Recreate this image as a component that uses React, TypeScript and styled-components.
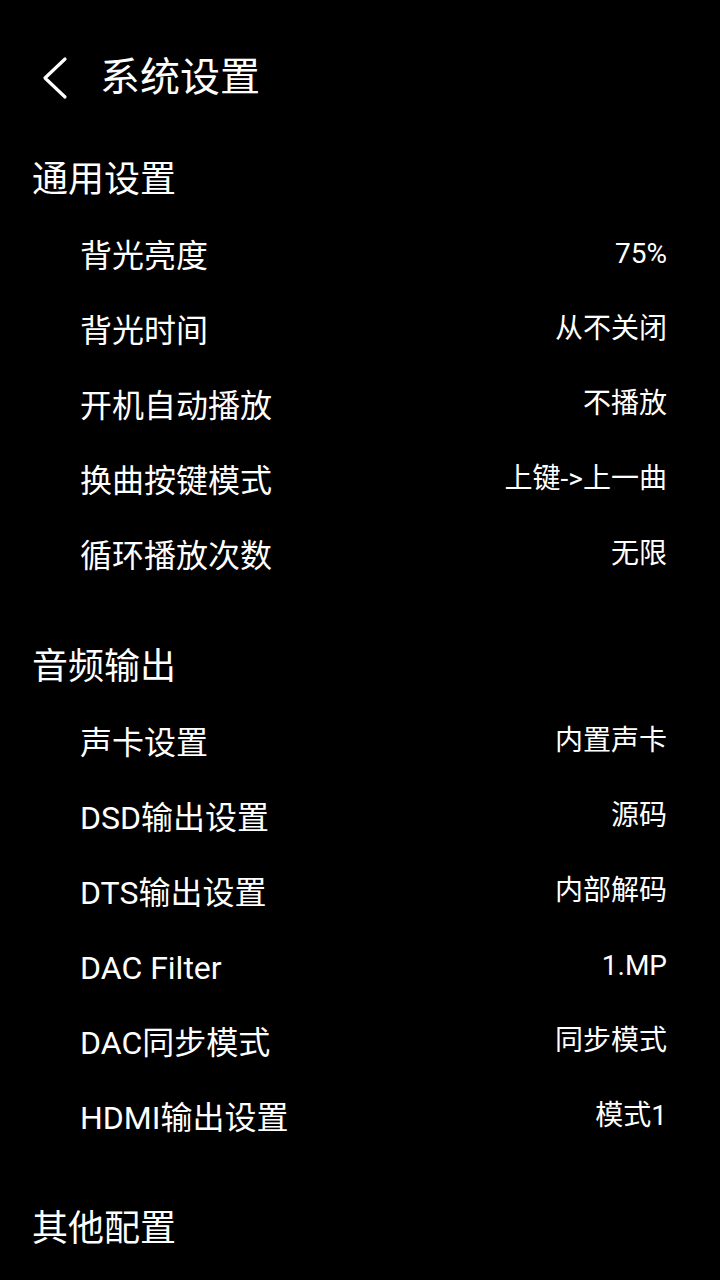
import React from "react";
import styled, { createGlobalStyle } from "styled-components";

const GlobalStyle = createGlobalStyle`
  html, body {
    margin: 0;
    padding: 0;
    background: #000;
  }
  body {
    font-family: Roboto, "Noto Sans CJK SC", sans-serif;
    color: #fff;
  }
`;

const Page = styled.div`
  width: 720px;
  min-height: 1280px;
  background: #000;
  overflow: hidden;
`;

const Header = styled.header`
  height: 138px;
  box-sizing: border-box;
  padding: 40px 0 0 41px;
  display: flex;
  align-items: flex-start;
`;

const HeaderInner = styled.div`
  height: 76px;
  display: flex;
  align-items: center;
  gap: 31px;
`;

const BackButton = styled.button`
  background: none;
  border: none;
  padding: 0;
  width: 28px;
  height: 44px;
  display: flex;
  align-items: center;
  justify-content: center;
  cursor: pointer;
`;

const Title = styled.h1`
  margin: 0;
  font-size: 40px;
  font-weight: 400;
  line-height: 1;
  color: #fff;
`;

const Section = styled.section<{ $first?: boolean }>`
  margin-top: ${(p) => (p.$first ? "0" : "32px")};
`;

const SectionTitle = styled.h2`
  margin: 0;
  height: 80px;
  box-sizing: border-box;
  padding: 0 0 4px 32px;
  display: flex;
  align-items: center;
  font-size: 36px;
  font-weight: 400;
  color: #fff;
`;

const Row = styled.div`
  height: 75px;
  display: flex;
  align-items: center;
  justify-content: space-between;
  padding: 0 53px 0 80px;
`;

const Label = styled.span`
  font-size: 32px;
  line-height: 1;
  color: #fff;
`;

const Value = styled.span`
  font-size: 28px;
  line-height: 1;
  color: #fff;
  margin-top: -4px;
`;

type Item = { label: string; value: string };

const sections: { title: string; items: Item[] }[] = [
  {
    title: "通用设置",
    items: [
      { label: "背光亮度", value: "75%" },
      { label: "背光时间", value: "从不关闭" },
      { label: "开机自动播放", value: "不播放" },
      { label: "换曲按键模式", value: "上键->上一曲" },
      { label: "循环播放次数", value: "无限" },
    ],
  },
  {
    title: "音频输出",
    items: [
      { label: "声卡设置", value: "内置声卡" },
      { label: "DSD输出设置", value: "源码" },
      { label: "DTS输出设置", value: "内部解码" },
      { label: "DAC Filter", value: "1.MP" },
      { label: "DAC同步模式", value: "同步模式" },
      { label: "HDMI输出设置", value: "模式1" },
    ],
  },
  {
    title: "其他配置",
    items: [],
  },
];

export default function App() {
  return (
    <Page>
      <GlobalStyle />
      <Header>
        <HeaderInner>
          <BackButton aria-label="back">
            <svg width="28" height="44" viewBox="0 0 28 44" fill="none">
              <path
                d="M24 3 L4 22 L24 41"
                stroke="#fff"
                strokeWidth="3.2"
                strokeLinecap="round"
                strokeLinejoin="round"
              />
            </svg>
          </BackButton>
          <Title>系统设置</Title>
        </HeaderInner>
      </Header>
      {sections.map((s, i) => (
        <Section key={s.title} $first={i === 0}>
          <SectionTitle>{s.title}</SectionTitle>
          {s.items.map((it) => (
            <Row key={it.label}>
              <Label>{it.label}</Label>
              <Value>{it.value}</Value>
            </Row>
          ))}
        </Section>
      ))}
    </Page>
  );
}
